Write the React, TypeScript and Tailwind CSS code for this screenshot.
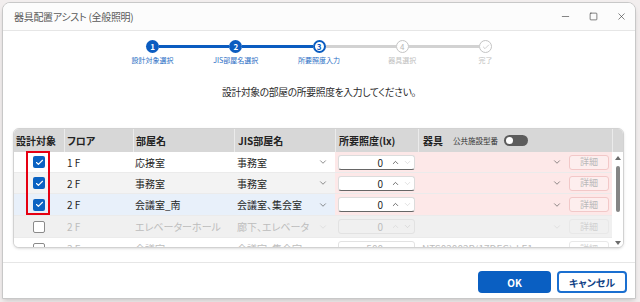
import { Check, ChevronDown, ChevronUp, Minus, Square, X } from "lucide-react";

const jp = "font-['Noto_Sans_CJK_JP','Noto_Sans',sans-serif] [font-feature-settings:'palt']";

type Row = {
  checked: boolean;
  floor: string;
  room: string;
  jis: string;
  lux: string;
  fixture: string;
  rowBg: string;
  luxBg: string;
  disabled: boolean;
};

const rows: Row[] = [
  { checked: true, floor: "1 F", room: "応接室", jis: "事務室", lux: "0", fixture: "", rowBg: "bg-white", luxBg: "bg-[#fde8e8]", disabled: false },
  { checked: true, floor: "2 F", room: "事務室", jis: "事務室", lux: "0", fixture: "", rowBg: "bg-[#f3f3f3]", luxBg: "bg-[#fde8e8]", disabled: false },
  { checked: true, floor: "2 F", room: "会議室_南", jis: "会議室、集会室", lux: "0", fixture: "", rowBg: "bg-[#e8f0fa]", luxBg: "bg-[#fde8e8]", disabled: false },
  { checked: false, floor: "2 F", room: "エレベーターホール", jis: "廊下、エレベータ", lux: "0", fixture: "", rowBg: "bg-[#f0f0f0]", luxBg: "bg-[#f0f0f0]", disabled: true },
  { checked: false, floor: "3 F", room: "会議室", jis: "会議室、集会室", lux: "500", fixture: "NTS02002B(17DEG)-LE1", rowBg: "bg-white", luxBg: "bg-white", disabled: true },
];

const steps = [
  { label: "設計対象選択", state: "done", n: "1" },
  { label: "JIS部屋名選択", state: "done", n: "2" },
  { label: "所要照度入力", state: "current", n: "3" },
  { label: "器具選択", state: "todo", n: "4" },
  { label: "完了", state: "todo", n: "" },
];

function StepCircle({ state, n }: { state: string; n: string }) {
  if (state === "done") {
    return (
      <div className="w-[13px] h-[13px] rounded-full bg-[#0b5cc0] flex items-center justify-center shrink-0">
        <span className="text-white text-[8px] font-bold leading-none">{n}</span>
      </div>
    );
  }
  if (state === "current") {
    return (
      <div className="w-[13px] h-[13px] rounded-full bg-white border-2 border-[#0b5cc0] flex items-center justify-center shrink-0">
        <span className="text-[#0b5cc0] text-[8px] font-bold leading-none">{n}</span>
      </div>
    );
  }
  return (
    <div className="w-[13px] h-[13px] rounded-full bg-white border border-[#c4c4c4] flex items-center justify-center shrink-0">
      {n ? (
        <span className="text-[#b8b8b8] text-[8px] leading-none">{n}</span>
      ) : (
        <Check className="w-[8px] h-[8px] text-[#b8b8b8]" strokeWidth={2} />
      )}
    </div>
  );
}

function Triangle({ up }: { up: boolean }) {
  return (
    <svg width="6" height="4" viewBox="0 0 6 4">
      <path d={up ? "M0 4 L3 0 L6 4 Z" : "M0 0 L3 4 L6 0 Z"} fill="#6b6b6b" />
    </svg>
  );
}

export default function App() {
  return (
    <div className={`w-[640px] h-[302px] bg-[#f2eeee] pt-[2px] pl-[2px] overflow-hidden ${jp}`}>
      <div className="w-[634px] h-[297px] bg-white border border-[#c8c8c8] rounded-t-lg shadow-md flex flex-col overflow-hidden">
        {/* title bar */}
        <div className="h-[28px] shrink-0 flex items-center border-b border-[#e6e6e6] bg-[#fcfcfc]">
          <span className="pl-[11px] text-[10px] tracking-[-0.3px] text-[#5a5a5a] flex-1">器具配置アシスト (全般照明)</span>
          <div className="w-[28px] flex justify-center">
            <Minus className="w-[11px] h-[11px] text-[#333]" strokeWidth={1.3} />
          </div>
          <div className="w-[28px] flex justify-center">
            <Square className="w-[9px] h-[9px] text-[#333]" strokeWidth={1.6} />
          </div>
          <div className="w-[28px] flex justify-center">
            <X className="w-[11px] h-[11px] text-[#333]" strokeWidth={1.3} />
          </div>
        </div>

        {/* stepper */}
        <div className="pt-[9px] flex flex-col items-center">
          <div className="w-[346px] flex items-center">
            {steps.map((s, i) => (
              <div key={s.label} className={`flex items-center ${i < steps.length - 1 ? "flex-1" : ""}`}>
                <StepCircle state={s.state} n={s.n} />
                {i < steps.length - 1 && (
                  <div className={`flex-1 h-[3px] ${i < 2 ? "bg-[#0b5cc0]" : "bg-[#d2d2d2]"}`} />
                )}
              </div>
            ))}
          </div>
          <div className="w-[416px] grid grid-cols-5 mt-[3px]">
            {steps.map((s) => (
              <span
                key={s.label}
                className={`text-center text-[7px] leading-[9px] ${s.state === "todo" ? "text-[#c0c0c0]" : "text-[#1f6cc4]"}`}
              >
                {s.label}
              </span>
            ))}
          </div>
        </div>

        <p className="mt-[20px] text-center text-[9.8px] tracking-[-0.35px] leading-[14px] text-[#2a2a2a]">
          設計対象の部屋の所要照度を入力してください。
        </p>

        {/* table */}
        <div className="relative mt-[29px] ml-[10px] w-[611px] h-[120px] shrink-0 border border-[#d2d2d2] rounded-md shadow-sm overflow-hidden bg-white">
          <div className="flex h-[23px] bg-[#d7d7d7] text-[10px] font-semibold text-[#222]">
            <div className="grid grid-cols-[50px_69px_101px_101px_83px_194px] items-center">
              <span className="pl-[2px]">設計対象</span>
              <span className="pl-[2px] h-full flex items-center border-l border-[#ebebeb]">フロア</span>
              <span className="pl-[2px] h-full flex items-center border-l border-[#ebebeb]">部屋名</span>
              <span className="pl-[3px] h-full flex items-center border-l border-[#ebebeb]">JIS部屋名</span>
              <span className="pl-[3px] h-full flex items-center border-l border-[#ebebeb]">所要照度(lx)</span>
              <div className="pl-[4px] h-full flex items-center border-l border-[#ebebeb]">
                <span className="font-bold">器具</span>
                <span className="ml-[10px] text-[7.5px] font-normal text-[#333]">公共施設型番</span>
                <div className="ml-[6px] w-[24px] h-[11px] rounded-full bg-[#5c5c5c] flex items-center pl-[2px]">
                  <div className="w-[7px] h-[7px] rounded-full bg-white" />
                </div>
              </div>
            </div>
            <div className="w-[11px] border-l border-[#ebebeb]" />
          </div>

          <div className="flex">
            <div className="w-[598px] flex flex-col">
              {rows.map((r, i) => {
                const txt = r.disabled ? "text-[#bdbdbd]" : "text-[#1f1f1f]";
                const chev = r.disabled ? "text-[#d6d6d6]" : "text-[#555]";
                return (
                  <div
                    key={i}
                    className={`grid grid-cols-[50px_69px_101px_101px_83px_194px] text-[10px] border-b border-[#ebebeb] ${i < 2 ? "h-[21px]" : "h-[22px]"} ${r.rowBg} ${txt}`}
                  >
                    <div className="flex items-center justify-center">
                      {r.checked ? (
                        <div className="w-[12px] h-[12px] rounded-[2px] bg-[#0a62c2] flex items-center justify-center">
                          <Check className="w-[9px] h-[9px] text-white" strokeWidth={3} />
                        </div>
                      ) : (
                        <div className="w-[12px] h-[12px] rounded-[2px] border border-[#8a8a8a] bg-white" />
                      )}
                    </div>
                    <div className="flex items-center pl-[3px]">{r.floor}</div>
                    <div className="flex items-center pl-[2px]">{r.room}</div>
                    <div className="flex items-center justify-between pl-[3px] pr-[7px]">
                      <span>{r.jis}</span>
                      <ChevronDown className={`w-[10px] h-[10px] ${chev}`} strokeWidth={1.6} />
                    </div>
                    <div className={`flex items-center pl-[3px] ${r.luxBg}`}>
                      <div
                        className={`w-[77px] h-[15px] rounded-[3px] flex items-center justify-end pr-[2px] ${
                          r.disabled
                            ? "border border-[#e2e2e2]"
                            : "bg-white border border-[#dcdcdc] border-b-[#666]"
                        }`}
                      >
                        <span>{r.lux}</span>
                        <ChevronUp className={`ml-[8px] w-[9px] h-[9px] ${r.disabled ? "text-[#d6d6d6]" : "text-[#333]"}`} strokeWidth={1.8} />
                        <ChevronDown className="ml-[3px] w-[9px] h-[9px] text-[#c8c8c8]" strokeWidth={1.4} />
                      </div>
                    </div>
                    <div className={`flex items-center ${r.luxBg}`}>
                      <span className="flex-1 pl-[4px] truncate">{r.fixture}</span>
                      <ChevronDown className={`mr-[7px] w-[10px] h-[10px] ${chev}`} strokeWidth={1.6} />
                      <div
                        className={`mr-[3px] w-[40px] h-[15px] rounded-[3px] border flex items-center justify-center text-[9px] ${
                          r.disabled ? "border-[#e8e8e8] text-[#d0d0d0]" : "border-[#f2c8c8] bg-[#fdeeee] text-[#b9b9b9]"
                        }`}
                      >
                        詳細
                      </div>
                    </div>
                  </div>
                );
              })}
            </div>
            <div className="w-[11px] h-[95px] flex flex-col items-center pt-[4px] pb-[2px] bg-white">
              <Triangle up />
              <div className="mt-[6px] w-[4px] h-[46px] rounded-full bg-[#858585]" />
              <div className="flex-1" />
              <Triangle up={false} />
            </div>
          </div>

          <div className="absolute left-[12px] top-[22px] w-[24px] h-[64px] border-2 border-[#e60012]" />
        </div>

        {/* footer */}
        <div className="mt-[14px] flex-1 border-t border-[#e6e6e6] flex justify-end items-start pt-[8px] pr-[8px] gap-[6px]">
          <button className="w-[73px] h-[22px] rounded-[4px] bg-[#0a5fc2] text-white text-[10px] font-semibold">
            OK
          </button>
          <button className="w-[70px] h-[22px] rounded-[4px] bg-white border-2 border-[#1a6fd0] text-[#0f3f86] text-[10px] font-semibold">
            キャンセル
          </button>
        </div>
      </div>
    </div>
  );
}
